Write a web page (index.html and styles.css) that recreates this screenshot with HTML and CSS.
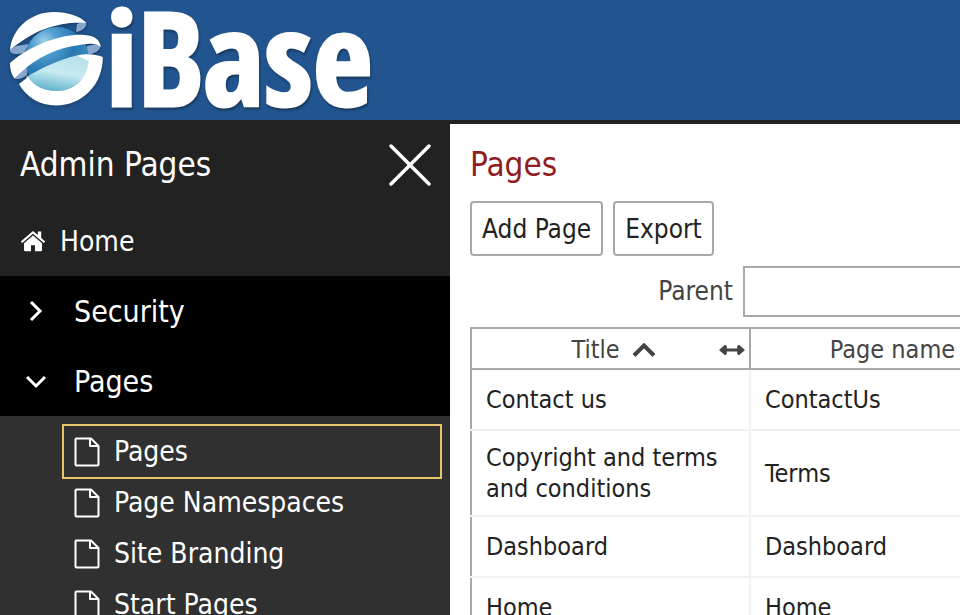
FILE: index.html
```
<!DOCTYPE html>
<html lang="en">
  <head>
    <meta charset="utf-8" />
    <meta name="viewport" content="width=device-width, initial-scale=1.0" />
    <title>iBase - Pages</title>
    <link rel="stylesheet" href="styles.css">
  </head>
  <body>
    <svg class="sprite" width="0" height="0" aria-hidden="true">
      <symbol id="icon-page" viewBox="0 0 26 30">
        <path d="M2.500 1.500H17l7.500 7.500V27.500a1 1 0 0 1-1 1H2.500a1 1 0 0 1-1-1V2.500a1 1 0 0 1 1-1z M16 1.500v7.500h8" fill="none" stroke="currentColor" stroke-width="2" stroke-linejoin="round" />
      </symbol>
      <symbol id="icon-resize" viewBox="0 0 26 12">
        <path d="M0 6L6 .8 7.800 2v2.500h10.400V2L20 .8 26 6l-6 5.200-1.800-1.200V7.500H7.800V10L6 11.200z" fill="currentColor" />
      </symbol>
    </svg>

    <header class="banner">
      <a class="logo" href="#" aria-label="iBase">
        <svg class="logo-globe" viewBox="6 8 100 104" aria-hidden="true">
          <defs>
            <radialGradient id="ball" cx="0.3" cy="0.22" r="0.8">
              <stop offset="0" stop-color="#9fd0ea" />
              <stop offset="0.25" stop-color="#4f9fcf" />
              <stop offset="0.6" stop-color="#2878b3" />
              <stop offset="1" stop-color="#3f92c0" />
            </radialGradient>
            <linearGradient id="bowl" x1="0.7" y1="0" x2="0.4" y2="1">
              <stop offset="0" stop-color="#b5dfea" />
              <stop offset="0.5" stop-color="#c8ebf0" />
              <stop offset="1" stop-color="#5fb3ce" />
            </linearGradient>
          </defs>
          <path d="M10 50c0 4 6 5 14 3l5-9-13 2z" fill="#86a6cd" />
          <path d="M86 23c1 4-4 8-10 9l1-8 6-2z" fill="#86a6cd" />
          <path d="M100 46c1 4-6 8-13 9v-9l10-2z" fill="#86a6cd" />
          <path d="M14 78c3 2 8 1 13-3l1-9-10 7z" fill="#86a6cd" />
          <circle cx="57" cy="59" r="32" fill="url(#ball)" />
          <path d="M26 77C40 69 60 59 77 55.500l11.500-.5C91 74 76 91 57 91 43 91 31 86 26 77z" fill="url(#bowl)" />
          <path d="M10 50C12 28 31 12 54 12c14 0 26 4 32.500 11C71 22 63 24 57 25.500 40 29 26 37 10 50z" fill="#fff" />
          <path d="M10 63C22 52 48 37 75 35c16-1 24 2 26 12-3-3-8-4-14-3-28 3-49 11-72.500 34.500C11 74 10 69 10 63z" fill="#fff" />
          <path d="M19 84l9-7c6 9 16 14 29 14 20 0 33-17 31.500-36l14.300 2C103 85 82 105.500 56 105.500 40 105.500 26 97 19 84z" fill="#fff" />
          <path d="M77 55.500c8-2 18-2 25.500 1.500l-14 4z" fill="#fff" />
        </svg>
        <span class="logo-name">iBase</span>
      </a>
    </header>

    <div class="layout">
      <nav class="sidebar" aria-label="Admin Pages">
        <div class="sidebar-head">
          <h2>Admin Pages</h2>
          <button class="close" type="button" aria-label="Close">
            <svg viewBox="0 0 44 44" aria-hidden="true">
              <path d="M3 3l38 38M41 3L3 41" stroke="currentColor" stroke-width="3.500" stroke-linecap="round" />
            </svg>
          </button>
        </div>

        <a class="home" href="#">
          <svg viewBox="0 0 26 22" aria-hidden="true">
            <path d="M13 1L.8 11.500l1.400 1.600L13 3.800l10.800 9.300 1.400-1.600-4-3.500V1.500h-3.400v3.600z" fill="currentColor" />
            <path d="M13 5.500L4 13.200V20c0 .8.400 1.200 1.200 1.200H11v-6h4v6h5.800c.8 0 1.200-.4 1.200-1.200v-6.800z" fill="currentColor" />
          </svg>
          Home
        </a>

        <button class="group" type="button" aria-expanded="false">
          <svg viewBox="0 0 24 24" aria-hidden="true"><path d="M7 3l9 9-9 9" /></svg>
          Security
        </button>
        <button class="group" type="button" aria-expanded="true">
          <svg viewBox="0 0 24 24" aria-hidden="true"><path d="M3 8l9 9 9-9" /></svg>
          Pages
        </button>

        <ul class="submenu">
          <li><a class="current" href="#"><svg><use href="#icon-page" /></svg>Pages</a></li>
          <li><a href="#"><svg><use href="#icon-page" /></svg>Page Namespaces</a></li>
          <li><a href="#"><svg><use href="#icon-page" /></svg>Site Branding</a></li>
          <li><a href="#"><svg><use href="#icon-page" /></svg>Start Pages</a></li>
        </ul>
      </nav>

      <main class="content">
        <h1>Pages</h1>
        <div class="toolbar">
          <button type="button">Add Page</button>
          <button type="button">Export</button>
        </div>
        <div class="filter">
          <label for="parent">Parent</label>
          <input id="parent" type="text" />
        </div>
        <table class="pages">
          <thead>
            <tr>
              <th>
                <div class="heading">
                  <span>Title</span>
                  <svg class="sort" viewBox="0 0 24 14" aria-hidden="true"><path d="M2 12.500l10-10 10 10" /></svg>
                  <svg class="resize"><use href="#icon-resize" /></svg>
                </div>
              </th>
              <th>
                <div class="heading">
                  <span>Page name</span>
                  <svg class="resize"><use href="#icon-resize" /></svg>
                </div>
              </th>
            </tr>
          </thead>
          <tbody>
            <tr><td>Contact us</td><td>ContactUs</td></tr>
            <tr><td>Copyright and terms and conditions</td><td>Terms</td></tr>
            <tr><td>Dashboard</td><td>Dashboard</td></tr>
            <tr><td>Home</td><td>Home</td></tr>
          </tbody>
        </table>
      </main>
    </div>
  </body>
</html>
```
FILE: styles.css
```
* {
  box-sizing: border-box;
}

body {
  margin: 0;
  height: 100vh;
  overflow: hidden;
  display: flex;
  flex-direction: column;
  background: #fff;
  color: #222;
  font-family: Tahoma, "DejaVu Sans Condensed", "DejaVu Sans", sans-serif;
  font-size: 26px;
  line-height: 31px;
}

button,
input {
  font: inherit;
  color: inherit;
}

h1,
h2 {
  margin: 0;
  font-size: 33px;
  font-weight: normal;
  line-height: 42px;
}

.sprite {
  position: absolute;
}

.banner {
  flex: none;
  background: #22558f;
  border-bottom: 4px solid #222;
}

.logo {
  display: flex;
  align-items: center;
  height: 120px;
  padding-left: 6px;
  color: #fff;
  text-decoration: none;
}

.logo-globe {
  width: 100px;
  height: 104px;
  filter: drop-shadow(0 1px 2px rgba(0, 0, 0, 0.3));
}

.logo-name {
  padding-bottom: 8px;
  font-family: "Open Sans Condensed", "Noto Sans Condensed", "Liberation Sans Narrow", "Open Sans", sans-serif;
  font-size: 130px;
  font-weight: bold;
  line-height: 112px;
  -webkit-text-stroke: 3px #fff;
  filter: drop-shadow(1px 2px 1px rgba(0, 0, 0, 0.35));
}

.layout {
  flex: 1;
  min-height: 0;
  display: flex;
}

.sidebar {
  flex: none;
  width: 450px;
  overflow: hidden;
  background: #222;
  color: #fff;
  font-size: 28px;
}

.sidebar a {
  color: inherit;
  text-decoration: none;
}

.sidebar-head {
  display: flex;
  align-items: center;
  justify-content: space-between;
  height: 82px;
  padding: 0 18px 0 20px;
}

.close {
  display: flex;
  padding: 0;
  border: 0;
  background: none;
  color: #fff;
}

.close svg {
  width: 44px;
  height: 44px;
}

.home {
  display: flex;
  align-items: center;
  gap: 14px;
  height: 70px;
  padding-left: 20px;
}

.home svg {
  width: 26px;
  height: 22px;
}

.group {
  display: flex;
  align-items: center;
  gap: 26px;
  width: 100%;
  height: 70px;
  padding: 0 24px;
  border: 0;
  background: #000;
  color: #fff;
  font-size: 30px;
}

.group svg {
  width: 24px;
  height: 24px;
  fill: none;
  stroke: currentColor;
  stroke-width: 3;
}

.submenu {
  height: 100%;
  margin: 0;
  padding: 10px 10px 0 64px;
  list-style: none;
  background: #303030;
}

.submenu a {
  display: flex;
  align-items: center;
  gap: 14px;
  padding: 10px;
}

.submenu .current {
  outline: 2px solid #e8c46c;
}

.submenu svg {
  width: 26px;
  height: 30px;
}

.content {
  flex: 1;
  min-width: 0;
  overflow: hidden;
  padding: 20px 0 0 20px;
}

h1 {
  color: #8f1d21;
}

.toolbar {
  display: flex;
  gap: 10px;
  margin-top: 15px;
}

.toolbar button {
  height: 55px;
  padding: 2px 10px 0;
  border: 2px solid #a9a9a9;
  border-radius: 4px;
  background: #fff;
}

.filter {
  display: flex;
  align-items: center;
  justify-content: flex-end;
  gap: 10px;
  width: 560px;
  margin: 10px 0;
  color: #444;
}

.filter input {
  width: 287px;
  height: 51px;
  border: 2px solid #a9a9a9;
}

.pages {
  width: 560px;
  table-layout: fixed;
  border-collapse: collapse;
  border: 2px solid #a9a9a9;
  font-size: 25px;
}

.pages th {
  height: 41px;
  padding: 2px 4px 0 10px;
  border: 2px solid #a9a9a9;
  color: #444;
  font-weight: normal;
}

.heading {
  display: grid;
  grid-template-columns: 1fr auto auto 1fr;
  align-items: center;
}

.heading span {
  grid-column: 2;
}

.sort {
  grid-column: 3;
  width: 24px;
  height: 14px;
  margin-left: 12px;
  fill: none;
  stroke: currentColor;
  stroke-width: 4;
}

.resize {
  grid-column: 4;
  justify-self: end;
  width: 26px;
  height: 12px;
}

.pages td {
  height: 61px;
  padding: 11px 14px;
  border: 2px solid #f2f2f2;
}

.pages td:first-child {
  border-left-color: #a9a9a9;
}
```
